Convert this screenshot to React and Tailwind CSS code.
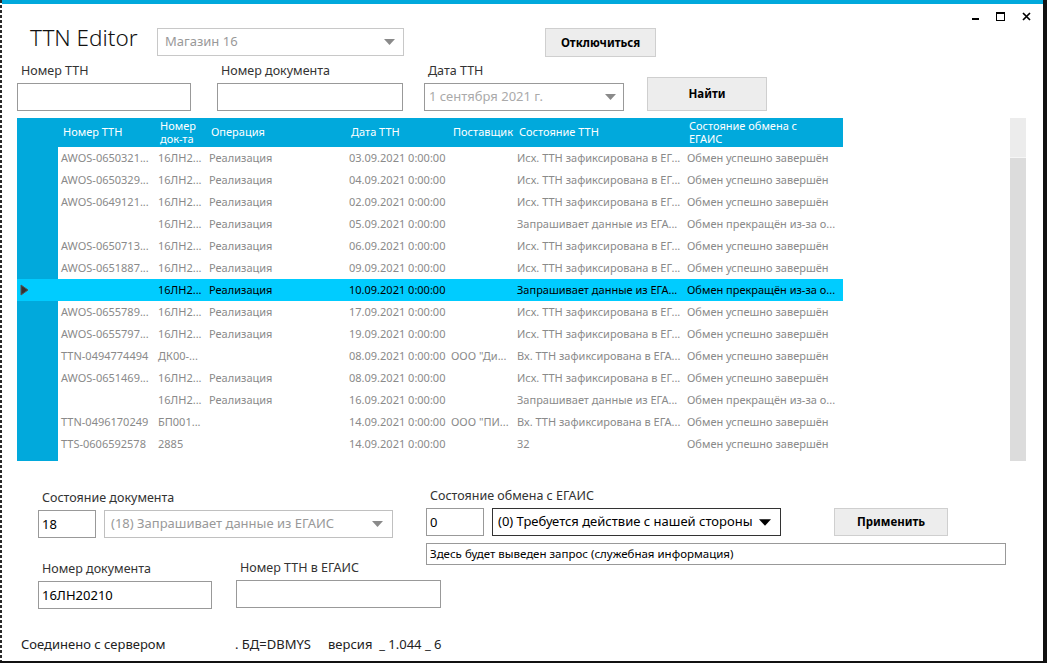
import React from 'react'

const widths = ['w-[97px]', 'w-[51px]', 'w-[140px]', 'w-[102px]', 'w-[66px]', 'w-[170px]', 'w-[159px]']

const heads = [
  ['Номер ТТН'],
  ['Номер', 'док-та'],
  ['Операция'],
  ['Дата ТТН'],
  ['Поставщик'],
  ['Состояние ТТН'],
  ['Состояние обмена с', 'ЕГАИС'],
]

const ISX = 'Исх. ТТН зафиксирована в ЕГ...'
const ZAP = 'Запрашивает данные из ЕГА...'
const VX = 'Вх. ТТН зафиксирована в ЕГА...'
const OK = 'Обмен успешно завершён'
const STOP = 'Обмен прекращён из-за о...'

const rows = [
  ['AWOS-0650321...', '16ЛН2...', 'Реализация', '03.09.2021 0:00:00', '', ISX, OK],
  ['AWOS-0650329...', '16ЛН2...', 'Реализация', '04.09.2021 0:00:00', '', ISX, OK],
  ['AWOS-0649121...', '16ЛН2...', 'Реализация', '02.09.2021 0:00:00', '', ISX, OK],
  ['', '16ЛН2...', 'Реализация', '05.09.2021 0:00:00', '', ZAP, STOP],
  ['AWOS-0650713...', '16ЛН2...', 'Реализация', '06.09.2021 0:00:00', '', ISX, OK],
  ['AWOS-0651887...', '16ЛН2...', 'Реализация', '09.09.2021 0:00:00', '', ISX, OK],
  ['', '16ЛН2...', 'Реализация', '10.09.2021 0:00:00', '', ZAP, STOP],
  ['AWOS-0655789...', '16ЛН2...', 'Реализация', '17.09.2021 0:00:00', '', ISX, OK],
  ['AWOS-0655797...', '16ЛН2...', 'Реализация', '19.09.2021 0:00:00', '', ISX, OK],
  ['TTN-0494774494', 'ДК00-...', '', '08.09.2021 0:00:00', 'ООО "Ди...', VX, OK],
  ['AWOS-0651469...', '16ЛН2...', 'Реализация', '08.09.2021 0:00:00', '', ISX, OK],
  ['', '16ЛН2...', 'Реализация', '16.09.2021 0:00:00', '', ZAP, STOP],
  ['TTN-0496170249', 'БП001...', '', '14.09.2021 0:00:00', 'ООО "ПИ...', VX, OK],
  ['TTS-0606592578', '2885', '', '14.09.2021 0:00:00', '', '32', OK],
]

const SELECTED = 6

const Arrow = ({ color = '#8a8a8a', w = 11, h = 6 }) => (
  <svg width={w} height={h} viewBox="0 0 11 6" className="shrink-0">
    <polygon points="0,0 11,0 5.5,6" fill={color} />
  </svg>
)

const Label = ({ children, className = '' }) => (
  <div className={`h-[21px] pl-[4px] text-[12.5px] leading-[18px] text-[#333] whitespace-nowrap ${className}`}>{children}</div>
)

const Btn = ({ children, className = '' }) => (
  <button className={`flex shrink-0 items-center justify-center bg-[#ededed] border border-[#cfcfcf] text-[11.5px] font-bold text-black ${className}`}>
    {children}
  </button>
)

function Grid() {
  return (
    <div className="flex ml-[15px] mt-[7px] h-[343px] w-[1009px]">
      <div className="flex flex-col w-[993px] bg-white">
        <div className="flex h-[29px] w-[826px] bg-[#01a9dc] text-white text-[11px]">
          <div className="w-[41px]" />
          {heads.map((h, i) => (
            <div key={i} className={`${widths[i]} flex flex-col justify-center pl-[5px] leading-[12.5px] whitespace-nowrap`}>
              {h.map((l, j) => <span key={j}>{l}</span>)}
            </div>
          ))}
        </div>
        {rows.map((r, i) => {
          const sel = i === SELECTED
          return (
            <div key={i} className={`flex h-[22px] w-[826px] text-[11px] ${sel ? 'bg-[#00ccff] text-black' : 'text-[#8a8a8a]'}`}>
              <div className={`w-[41px] flex items-center pl-[3px] ${sel ? '' : 'bg-[#01a9dc]'}`}>
                {sel && (
                  <svg width="9" height="12" viewBox="0 0 9 12">
                    <polygon points="1,1 8,6 1,11" fill="#333" stroke="#555" strokeWidth="1" />
                  </svg>
                )}
              </div>
              {r.map((c, j) => (
                <div key={j} className={`${widths[j]} flex items-center pl-[3px] overflow-hidden whitespace-nowrap`}>{c}</div>
              ))}
            </div>
          )
        })}
        <div className="w-[41px] h-[6px] bg-[#01a9dc]" />
      </div>
      <div className="flex flex-col w-[16px] h-full">
        <div className="h-[40px] bg-[#ececec] border-b border-[#f6f6f6]" />
        <div className="flex-1 bg-[#dcdcdc]" />
      </div>
    </div>
  )
}

export default function App() {
  return (
    <div className="flex w-[1047px] h-[663px] bg-white border-b-2 border-[#111] font-['Noto_Sans',sans-serif] text-[#222] overflow-hidden">
      <div className="w-[2px] h-full bg-[repeating-linear-gradient(to_bottom,#2a2a2a_0_3px,#ffffff_3px_5px)]" />
      <div className="flex flex-col w-[1041px]">
        <div className="h-[4px] bg-[#01a9dc]" />

        {/* window controls */}
        <div className="flex justify-end items-start h-[24px] pt-[8px] pr-[12px] gap-[17px]">
          <div className="w-[7px] h-[2px] bg-black mt-[6px]" />
          <div className="w-[9px] h-[9px] border border-t-2 border-black" />
          <svg width="9" height="9" viewBox="0 0 9 9">
            <path d="M1 1L8 8M8 1L1 8" stroke="#000" strokeWidth="1.7" />
          </svg>
        </div>

        {/* title row */}
        <div className="flex items-start h-[29px]">
          <div className="ml-[28px] w-[127px] text-[22.5px] font-light leading-none -mt-[1px] text-[#111] whitespace-nowrap">TTN Editor</div>
          <div className="flex items-center justify-between w-[247px] h-[28px] border border-[#c8c8c8] pl-[7px] pr-[8px] text-[13px] text-[#999]">
            <span>Магазин 16</span>
            <Arrow />
          </div>
          <Btn className="ml-[141px] w-[111px] h-[29px]">Отключиться</Btn>
        </div>

        {/* search row */}
        <div className="flex items-end mt-[5px] ml-[15px]">
          <div className="w-[174px] shrink-0">
            <Label>Номер ТТН</Label>
            <div className="h-[28px] border border-[#999]" />
          </div>
          <div className="w-[186px] shrink-0 ml-[26px]">
            <Label>Номер документа</Label>
            <div className="h-[28px] border border-[#999]" />
          </div>
          <div className="w-[200px] shrink-0 ml-[21px]">
            <Label>Дата ТТН</Label>
            <div className="flex items-center justify-between h-[28px] border border-[#999] pl-[4px] pr-[7px] text-[13px] text-[#aaa]">
              <span>1 сентября 2021 г.</span>
              <Arrow />
            </div>
          </div>
          <Btn className="ml-[23px] w-[120px] h-[34px]">Найти</Btn>
        </div>

        <Grid />

        {/* bottom edit area */}
        <div className="flex items-start h-[147px]">
          <div className="w-[386px] shrink-0 ml-[36px] mt-[28px]">
            <Label>Состояние документа</Label>
            <div className="flex h-[28px]">
              <div className="w-[58px] shrink-0 border border-[#999] pl-[3px] text-[13px] leading-[26px] text-black">18</div>
              <div className="flex shrink-0 items-center justify-between ml-[8px] w-[289px] border border-[#c0c0c0] pl-[6px] pr-[9px] text-[13px] text-[#999]">
                <span className="whitespace-nowrap">(18) Запрашивает данные из ЕГАИС</span>
                <Arrow />
              </div>
            </div>
            <div className="flex mt-[22px] w-max">
              <div className="w-[174px] shrink-0">
                <Label>Номер документа</Label>
                <div className="h-[28px] border border-[#999] pl-[3px] text-[13px] leading-[26px] text-black">16ЛН20210</div>
              </div>
              <div className="w-[205px] shrink-0 ml-[24px] -mt-[1px]">
                <Label>Номер ТТН в ЕГАИС</Label>
                <div className="h-[28px] border border-[#999]" />
              </div>
            </div>
          </div>
          <div className="w-[580px] shrink-0 ml-[2px] mt-[26px]">
            <Label>Состояние обмена с ЕГАИС</Label>
            <div className="flex h-[28px]">
              <div className="w-[58px] shrink-0 border border-[#999] pl-[3px] text-[13px] leading-[26px] text-black">0</div>
              <div className="flex shrink-0 items-center justify-between ml-[8px] w-[289px] border border-[#333] pl-[5px] pr-[9px] text-[13px] text-black">
                <span className="whitespace-nowrap">(0) Требуется действие с нашей стороны</span>
                <Arrow color="#000" w={12} h={7} />
              </div>
              <Btn className="ml-[53px] w-[114px] h-[28px]">Применить</Btn>
            </div>
            <div className="mt-[7px] h-[22px] border border-[#999] pl-[3px] text-[11.5px] leading-[20px] text-black whitespace-nowrap">
              Здесь будет выведен запрос (служебная информация)
            </div>
          </div>
        </div>

        {/* status */}
        <div className="flex mt-[27px] pl-[19px] text-[13px] leading-[18px] text-[#222] whitespace-nowrap">
          <span className="w-[214px]">Соединено с сервером</span>
          <span className="w-[93px]">. БД=DBMYS</span>
          <span>версия&nbsp; _ 1.044 _ 6</span>
        </div>
      </div>
      <div className="w-[4px] h-full bg-[#111]" />
    </div>
  )
}
